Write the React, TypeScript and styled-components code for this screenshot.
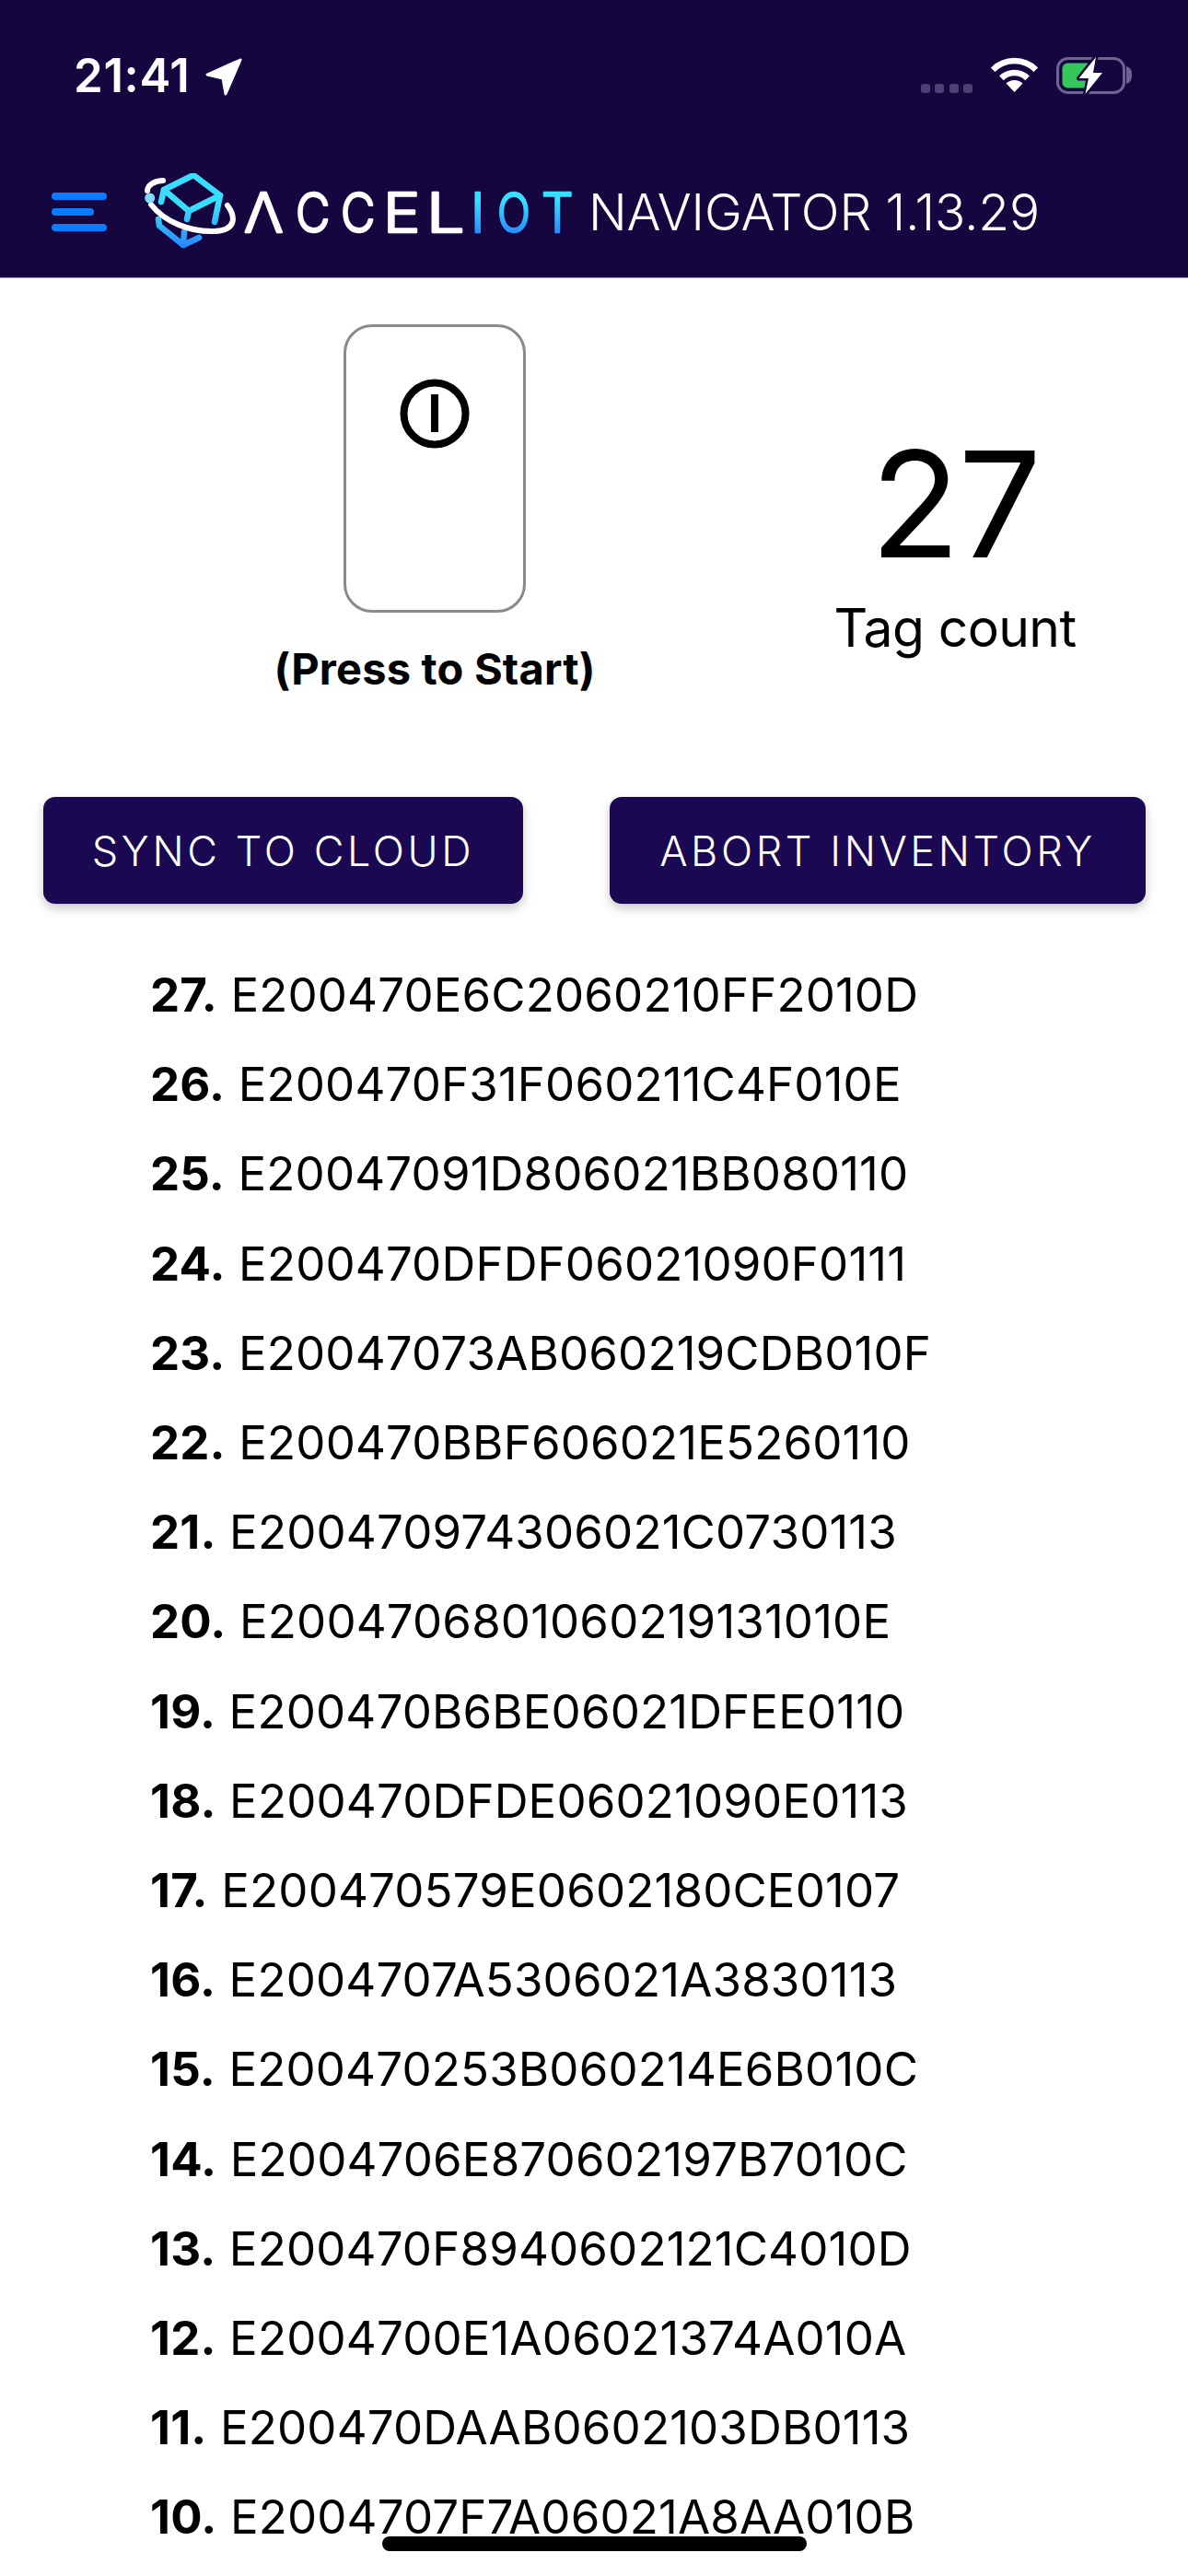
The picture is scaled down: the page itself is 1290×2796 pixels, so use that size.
import React from "react";
import styled, { createGlobalStyle } from "styled-components";

const Global = createGlobalStyle`
  html, body { margin: 0; padding: 0; background: #fff; }
  #root { width: 1290px; height: 2796px; overflow: hidden; }
`;
const Page = styled.div`
  position: relative;
  width: 1290px;
  height: 2796px;
  overflow: hidden;
  background: #fff;
  color: #000;
  font-family: Inter, "Liberation Sans", sans-serif;
`;
const Header = styled.header`
  height: 301px;
  background: #160640;
  border-bottom: 1px solid #9d97b5;
  display: flex;
  flex-direction: column;
`;
const StatusBar = styled.div`
  height: 188px;
  flex: none;
  display: flex;
  align-items: flex-start;
  padding: 61px 61px 0 80px;
  box-sizing: border-box;
`;
const Clock = styled.span`
  font-size: 51px;
  font-weight: 600;
  line-height: 41px;
  color: #fff;
  letter-spacing: 0.6px;
`;
const ArrowIcon = styled.svg`
  width: 40px;
  height: 41px;
  margin: 2px 0 0 16px;
`;
const StatusRight = styled.div`
  margin-left: auto;
  display: flex;
  align-items: flex-start;
  gap: 19px;
`;
const Signal = styled.div`
  display: flex;
  gap: 5.5px;
  margin-top: 30px;
`;
const SignalDot = styled.i`
  width: 10px;
  height: 10px;
  border-radius: 3px;
  background: #4b4072;
`;
const WifiIcon = styled.svg`
  width: 53px;
  height: 39px;
`;
const BatteryIcon = styled.svg`
  width: 82px;
  height: 41px;
`;
const NavBar = styled.div`
  display: flex;
  align-items: flex-start;
  padding-left: 56px;
`;
const Burger = styled.div`
  display: flex;
  flex-direction: column;
  gap: 9px;
  width: 60px;
  margin-top: 21px;
`;
const BurgerLine = styled.i<{ $short?: boolean }>`
  display: block;
  height: 8px;
  border-radius: 4px;
  width: ${(p) => (p.$short ? "46px" : "60px")};
  background: #0a7cff;
`;
const Logo = styled.svg`
  width: 470px;
  height: 84px;
  margin-left: 41px;
  flex: none;
`;
const Title = styled.span`
  margin: 6px 0 0 12px;
  font-size: 55px;
  line-height: 72px;
  font-weight: 350;
  color: #fff;
  white-space: nowrap;
  letter-spacing: -0.15px;
`;
const Hero = styled.section`
  display: grid;
  grid-template-columns: 404px 498px;
  column-gap: 114px;
  padding: 50px 0 0 270px;
`;
const PowerColumn = styled.div`
  display: flex;
  flex-direction: column;
  align-items: center;
`;
const PowerCard = styled.div`
  width: 198px;
  height: 313px;
  box-sizing: border-box;
  border: 3px solid #8a8a8a;
  border-radius: 31px;
  display: flex;
  justify-content: center;
  padding-top: 56px;
`;
const PowerIcon = styled.svg`
  width: 76px;
  height: 76px;
`;
const PressLabel = styled.div`
  font-size: 47px;
  font-weight: 700;
  line-height: 54px;
  margin-top: 34px;
  white-space: nowrap;
  letter-spacing: 0.2px;
`;
const CountColumn = styled.div`
  display: flex;
  flex-direction: column;
  align-items: center;
`;
const CountValue = styled.div`
  font-size: 160px;
  font-weight: 400;
  line-height: 170px;
  margin-top: 110px;
  letter-spacing: -2px;
`;
const CountLabel = styled.div`
  font-size: 57px;
  font-weight: 400;
  line-height: 68px;
  margin-top: 16px;
  white-space: nowrap;
  letter-spacing: -0.6px;
`;
const Actions = styled.div`
  display: flex;
  gap: 94px;
  padding: 112px 0 0 47px;
`;
const ActionButton = styled.button<{ $w: number }>`
  width: ${(p) => p.$w}px;
  height: 116px;
  border: 0;
  border-radius: 13px;
  background: #1a0952;
  color: #fff;
  font-family: Inter, Roboto, sans-serif;
  font-size: 45px;
  font-weight: 300;
  letter-spacing: 3.6px;
  box-shadow: 0 5px 12px rgba(0, 0, 0, 0.22);
  padding: 0;
`;
const TagList = styled.ol`
  list-style: none;
  margin: 0;
  padding: 50px 0 0 163px;
`;
const TagRow = styled.li`
  font-size: 51px;
  line-height: 97.2px;
  letter-spacing: 0.15px;
  white-space: nowrap;
`;
const TagIndex = styled.b`
  font-weight: 700;
`;
const HomeIndicator = styled.div`
  position: absolute;
  left: 415px;
  top: 2753px;
  width: 461px;
  height: 16px;
  border-radius: 8px;
  background: #000;
`;

const tags: [number, string][] = [
  [27, "E200470E6C2060210FF2010D"],
  [26, "E200470F31F060211C4F010E"],
  [25, "E20047091D806021BB080110"],
  [24, "E200470DFDF06021090F0111"],
  [23, "E20047073AB060219CDB010F"],
  [22, "E200470BBF606021E5260110"],
  [21, "E200470974306021C0730113"],
  [20, "E2004706801060219131010E"],
  [19, "E200470B6BE06021DFEE0110"],
  [18, "E200470DFDE06021090E0113"],
  [17, "E200470579E0602180CE0107"],
  [16, "E2004707A5306021A3830113"],
  [15, "E200470253B060214E6B010C"],
  [14, "E2004706E870602197B7010C"],
  [13, "E200470F8940602121C4010D"],
  [12, "E2004700E1A06021374A010A"],
  [11, "E200470DAAB0602103DB0113"],
  [10, "E2004707F7A06021A8AA010B"],
];

const wordmark: { ch: string; x: number; sx: number; accent?: boolean }[] = [
  { ch: "Λ", x: 108, sx: 1.07 },
  { ch: "C", x: 164, sx: 0.87 },
  { ch: "C", x: 213, sx: 0.87 },
  { ch: "E", x: 259, sx: 1.15 },
  { ch: "L", x: 306, sx: 1.25 },
  { ch: "I", x: 354, sx: 1, accent: true },
  { ch: "O", x: 383, sx: 0.8, accent: true },
  { ch: "T", x: 431, sx: 0.92, accent: true },
];

function LogoMark() {
  // origin of the drawing is (157,188) in the page
  const o = (x: number, y: number) => `${x - 157} ${y - 188}`;
  return (
    <Logo viewBox="0 0 470 84" fill="none">
      <defs>
        <linearGradient id="cube" gradientUnits="userSpaceOnUse" x1="0" y1="0" x2="0" y2="80">
          <stop offset="0.45" stopColor="#38deff" />
          <stop offset="1" stopColor="#2a86ff" />
        </linearGradient>
        <linearGradient id="iot" gradientUnits="userSpaceOnUse" x1="0" y1="-43" x2="0" y2="0">
          <stop offset="0.2" stopColor="#38deff" />
          <stop offset="1" stopColor="#2a8cff" />
        </linearGradient>
      </defs>
      <g stroke="url(#cube)" strokeWidth="6.5" strokeLinecap="round" strokeLinejoin="round">
        <path d={`M${o(178, 206)} L${o(210, 190)} L${o(239, 212)} L${o(205, 229)} Z`} />
        <path d={`M${o(178, 206)} L${o(175, 219)}`} />
        <path d={`M${o(205, 229)} L${o(203, 238)}`} />
        <path d={`M${o(239, 212)} L${o(233, 241)}`} />
        <path d={`M${o(172, 238)} L${o(173, 245)} L${o(199, 266)} L${o(216, 258)}`} />
        <path d={`M${o(200, 252)} L${o(199, 266)}`} />
      </g>
      <path
        d={`M${o(247, 223)} C${o(256, 235)} ${o(257, 250)} ${o(233, 251)} C${o(205, 252)} ${o(178, 240)} ${o(164, 222)}`}
        stroke="#fff"
        strokeWidth="6"
        strokeLinecap="round"
      />
      <path
        d={`M${o(177, 196)} C${o(168, 196)} ${o(160, 201)} ${o(160, 207)}`}
        stroke="#fff"
        strokeWidth="6"
        strokeLinecap="round"
      />
      <circle cx={162.7 - 157} cy={215 - 188} r="5.5" fill="#7fdcff" />
      <g fontFamily="Inter, sans-serif" fontSize="59" fontWeight="300" strokeWidth="2.4" strokeLinejoin="round">
        {wordmark.map((l, i) => (
          <text
            key={i}
            transform={`translate(${l.x} 64) scale(${l.sx} 1)`}
            fill={l.accent ? "url(#iot)" : "#fff"}
            stroke={l.accent ? "url(#iot)" : "#fff"}
          >
            {l.ch}
          </text>
        ))}
      </g>
    </Logo>
  );
}

export default function App() {
  return (
    <Page>
      <Global />
      <Header>
        <StatusBar>
          <Clock>21:41</Clock>
          <ArrowIcon viewBox="0 0 40 41">
            <path
              d="M38 2 L2 18 L19 22 L22 39 Z"
              fill="#fff"
              stroke="#fff"
              strokeWidth="3"
              strokeLinejoin="round"
            />
          </ArrowIcon>
          <StatusRight>
            <Signal>
              <SignalDot />
              <SignalDot />
              <SignalDot />
              <SignalDot />
            </Signal>
            <WifiIcon viewBox="0 0 53 39" fill="none">
              <path d="M3.2 14.7 A33 33 0 0 1 49.8 14.7" stroke="#fff" strokeWidth="6.5" />
              <path d="M12.4 23.9 A20 20 0 0 1 40.6 23.9" stroke="#fff" strokeWidth="6.5" />
              <path d="M26.5 39 L17.5 29.5 A13 13 0 0 1 35.5 29.5 Z" fill="#fff" />
            </WifiIcon>
            <BatteryIcon viewBox="0 0 82 41" fill="none">
              <rect x="1.5" y="2.5" width="72" height="37" rx="11" stroke="#6d6490" strokeWidth="3" />
              <path d="M76 11 C80 12 82 15 82 20.5 C82 26 80 29 76 30 Z" fill="#6d6490" />
              <rect x="6.5" y="7.5" width="34" height="27" rx="6" fill="#34c759" />
              <path
                d="M43 1 L24.5 24 L35 24 L31.5 41 L50 18 L40 18 Z"
                fill="#fff"
                stroke="#160640"
                strokeWidth="5"
                strokeLinejoin="round"
                paintOrder="stroke"
              />
            </BatteryIcon>
          </StatusRight>
        </StatusBar>
        <NavBar>
          <Burger>
            <BurgerLine />
            <BurgerLine $short />
            <BurgerLine />
          </Burger>
          <LogoMark />
          <Title>NAVIGATOR 1.13.29</Title>
        </NavBar>
      </Header>
      <Hero>
        <PowerColumn>
          <PowerCard>
            <PowerIcon viewBox="0 0 76 76" fill="none">
              <circle cx="38" cy="38" r="33.5" stroke="#000" strokeWidth="8" />
              <rect x="34" y="17" width="8" height="41" fill="#000" />
            </PowerIcon>
          </PowerCard>
          <PressLabel>(Press to Start)</PressLabel>
        </PowerColumn>
        <CountColumn>
          <CountValue>27</CountValue>
          <CountLabel>Tag count</CountLabel>
        </CountColumn>
      </Hero>
      <Actions>
        <ActionButton $w={521}>SYNC TO CLOUD</ActionButton>
        <ActionButton $w={582}>ABORT INVENTORY</ActionButton>
      </Actions>
      <TagList>
        {tags.map(([n, code]) => (
          <TagRow key={n}>
            <TagIndex>{n}.</TagIndex> {code}
          </TagRow>
        ))}
      </TagList>
      <HomeIndicator />
    </Page>
  );
}
